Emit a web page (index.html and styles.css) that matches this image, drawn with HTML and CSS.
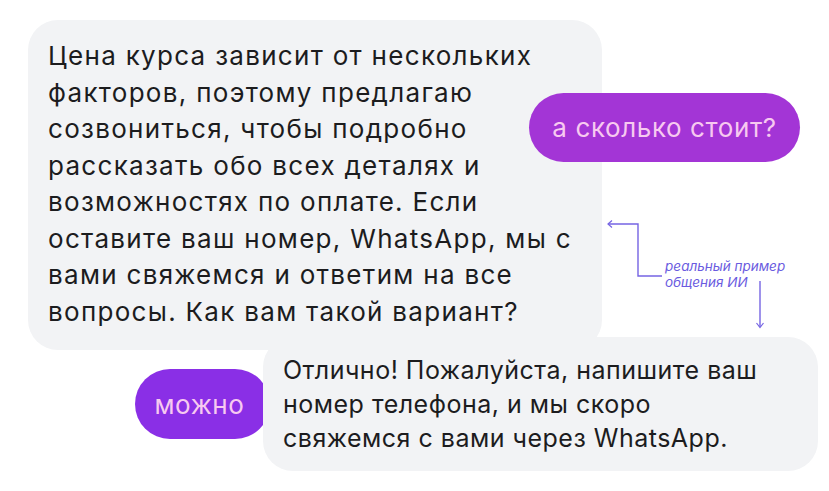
FILE: index.html
```html
<!DOCTYPE html>
<html lang="ru">
<head>
<meta charset="utf-8">
<link rel="stylesheet" href="styles.css">
</head>
<body>
<main class="chat">
  <div class="row row-top">
    <div class="bubble bubble-bot bubble-long">Цена курса зависит от нескольких<br>факторов, поэтому предлагаю<br>созвониться, чтобы подробно<br>рассказать обо всех деталях и<br>возможностях по оплате. Если<br>оставите ваш номер, WhatsApp, мы с<br>вами свяжемся и ответим на все<br>вопросы. Как вам такой вариант?</div>
    <div class="bubble bubble-user bubble-magenta">а сколько стоит?</div>
  </div>
  <div class="row row-bottom">
    <div class="bubble bubble-user bubble-violet">можно</div>
    <div class="bubble bubble-bot bubble-short">Отлично! Пожалуйста, напишите ваш<br>номер телефона, и мы скоро<br>свяжемся с вами через WhatsApp.</div>
  </div>
  <div class="note">
    <svg class="note-lines" width="170" height="120" viewBox="0 0 170 120">
      <path d="M2 9 H32 V61 H56" fill="none" stroke="#7564e3" stroke-width="1.4"/>
      <path d="M6 5.5 L2 9 L6 12.5" fill="none" stroke="#7564e3" stroke-width="1.2"/>
      <path d="M154 66 V112" fill="none" stroke="#7564e3" stroke-width="1.4"/>
      <path d="M150.5 108 L154 112.5 L157.5 108" fill="none" stroke="#7564e3" stroke-width="1.2"/>
    </svg>
    <p class="note-text">реальный пример<br>общения ИИ</p>
  </div>
</main>
</body>
</html>
```
FILE: styles.css
```css
* { box-sizing: border-box; }
html, body { margin: 0; background: #ffffff; }
body {
  width: 829px;
  height: 491px;
  overflow: hidden;
  font-family: "Inter", "Noto Sans", sans-serif;
}
.chat {
  position: relative;
  padding: 20px 0 0 28px;
}
.row { display: flex; }
.row-top { align-items: flex-start; }
.row-bottom {
  align-items: center;
  margin-top: -13px;
  margin-left: 107px;
}
.bubble { white-space: nowrap; }
.bubble-bot {
  background: #f2f3f5;
  color: #1c1c1e;
  border-radius: 30px;
  position: relative;
  z-index: 1;
}
.bubble-long {
  width: 574px;
  padding: 18px 20px 20px 20px;
  font-size: 26px;
  line-height: 36.5px;
  letter-spacing: 1.3px;
}
.bubble-short {
  width: 555px;
  padding: 16px 20px 16px 20px;
  font-size: 25px;
  line-height: 34px;
  letter-spacing: 0.5px;
}
.bubble-user {
  color: #f7c9f0;
  border-radius: 35px;
  height: 69px;
  display: flex;
  align-items: center;
  justify-content: center;
  font-size: 26px;
  letter-spacing: 0.6px;
  position: relative;
  z-index: 2;
}
.bubble-magenta {
  background: #a335d6;
  width: 271px;
  margin-left: -73px;
  margin-top: 73px;
}
.bubble-violet {
  background: #8a2fe6;
  width: 135px;
  height: 70px;
  margin-right: -7px;
  padding-right: 6px;
  z-index: 0;
}
.note {
  position: absolute;
  left: 606px;
  top: 215px;
  width: 180px;
  height: 120px;
}
.note-lines { position: absolute; left: 0; top: 0; }
.note-text {
  position: absolute;
  left: 59px;
  top: 43px;
  margin: 0;
  font-size: 13.5px;
  line-height: 16px;
  font-style: italic;
  color: #6a5be0;
  white-space: nowrap;
}
```
